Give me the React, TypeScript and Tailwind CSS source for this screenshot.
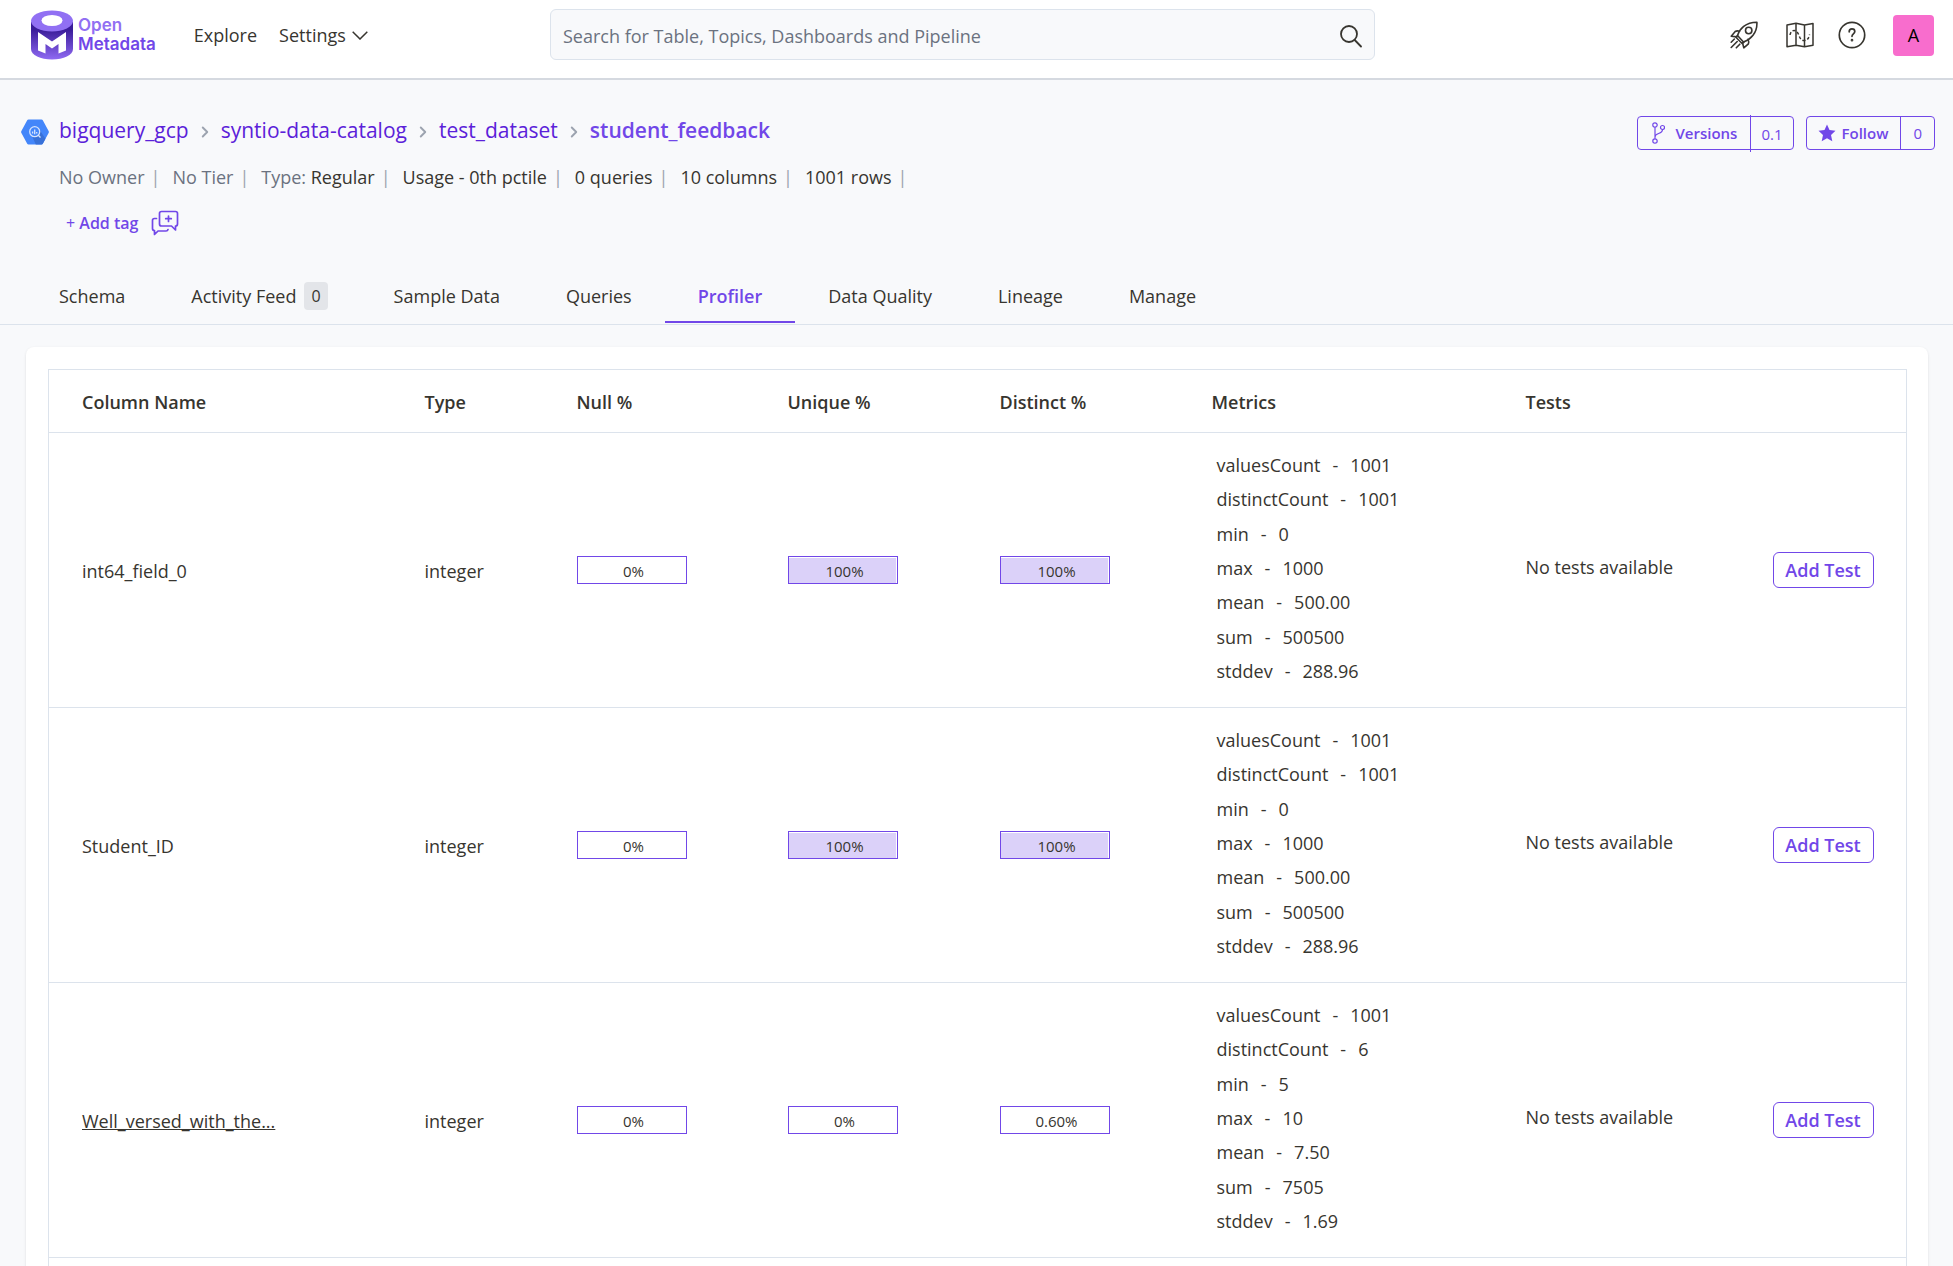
import { useState } from 'react'
import { ChevronRight } from 'lucide-react'

interface Metric {
  name: string
  value: string
}

interface ColumnProfile {
  name: string
  truncated?: boolean
  type: string
  nullPct: number
  uniquePct: number
  distinctPct: number
  metrics: Metric[]
}

const studentMetrics: Metric[] = [
  { name: 'valuesCount', value: '1001' },
  { name: 'distinctCount', value: '1001' },
  { name: 'min', value: '0' },
  { name: 'max', value: '1000' },
  { name: 'mean', value: '500.00' },
  { name: 'sum', value: '500500' },
  { name: 'stddev', value: '288.96' },
]

const columns: ColumnProfile[] = [
  {
    name: 'int64_field_0',
    type: 'integer',
    nullPct: 0,
    uniquePct: 100,
    distinctPct: 100,
    metrics: studentMetrics,
  },
  {
    name: 'Student_ID',
    type: 'integer',
    nullPct: 0,
    uniquePct: 100,
    distinctPct: 100,
    metrics: studentMetrics,
  },
  {
    name: 'Well_versed_with_the...',
    truncated: true,
    type: 'integer',
    nullPct: 0,
    uniquePct: 0,
    distinctPct: 0.6,
    metrics: [
      { name: 'valuesCount', value: '1001' },
      { name: 'distinctCount', value: '6' },
      { name: 'min', value: '5' },
      { name: 'max', value: '10' },
      { name: 'mean', value: '7.50' },
      { name: 'sum', value: '7505' },
      { name: 'stddev', value: '1.69' },
    ],
  },
]

const tabs = [
  { label: 'Schema' },
  { label: 'Activity Feed', count: 0 },
  { label: 'Sample Data' },
  { label: 'Queries' },
  { label: 'Profiler' },
  { label: 'Data Quality' },
  { label: 'Lineage' },
  { label: 'Manage' },
]

const breadcrumbs = ['bigquery_gcp', 'syntio-data-catalog', 'test_dataset']

const formatPct = (value: number) =>
  Number.isInteger(value) ? `${value}%` : `${value.toFixed(2)}%`

function Logo() {
  return (
    <a href="#" className="flex items-center gap-[5px]">
      <svg width="42" height="50" viewBox="0 0 42 50" aria-hidden="true">
        <defs>
          <linearGradient id="logo-body" x1="0" y1="0" x2="0" y2="1">
            <stop offset="0.2" stopColor="#3a1c99" />
            <stop offset="1" stopColor="#8f69f2" />
          </linearGradient>
        </defs>
        <path d="M0 12v27c0 6 9.400 10.500 21 10.500s21-4.500 21-10.500V12z" fill="url(#logo-body)" />
        <ellipse cx="21" cy="11" rx="21" ry="10.500" fill="#9170f3" />
        <ellipse cx="21" cy="10.500" rx="10.500" ry="5.500" fill="#fff" />
        <path d="M7 22l14 9.500L35 22v18.500l-7.500 3V34L21 38.500 14.500 34v9.500L7 40.500z" fill="#fff" />
      </svg>
      <span className="flex flex-col font-['Inter',sans-serif] text-[17px] leading-[19px] font-semibold">
        <span className="text-[#9170f3]">Open</span>
        <span className="text-[#7147e8]">Metadata</span>
      </span>
    </a>
  )
}

function RocketIcon() {
  return (
    <svg width="28" height="28" viewBox="0 0 28 28" fill="none" stroke="currentColor" strokeWidth="1.600" strokeLinecap="round" strokeLinejoin="round">
      <path d="M7.500 14.500C9.500 8 15.500 1.300 26.900 1.300c.5 10.700-6.400 17.200-13.400 19.700z" />
      <circle cx="18.700" cy="9.500" r="3.200" />
      <path d="M9.600 10.200c-1.800-.6-3.200-.5-4.400.3L1.200 15.200l5.700.7M18 18.200c.8 1.800.9 3.200.4 4.600l-4.600 4-1.300-5" />
      <path d="M7.500 14.500l-1.600 1.800 6.200 6.200 1.900-1.500" />
      <path d="M4.400 18L1.200 21.200M7.200 20.500l-6 6M9.800 23.200l-3.500 3.600" />
    </svg>
  )
}

function MapIcon() {
  return (
    <svg width="28" height="28" viewBox="0 0 28 28" fill="none" stroke="currentColor" strokeWidth="1.500" strokeLinejoin="round">
      <path d="M1 4l9-1.800 8.500 1.800L27 2.500v21.700L18.500 25.700 10 24.200 1 25.700zM10 2.200v22M18.500 4v21.700" />
      <path d="M4 14c.5-3 2-4.500 4-4.500 6 0 4 10 10 10 3 0 5-2 5.500-6" strokeDasharray="3 2" />
    </svg>
  )
}

function HelpIcon() {
  return (
    <svg width="28" height="28" viewBox="0 0 28 28" fill="none" stroke="currentColor" strokeWidth="1.700" strokeLinecap="round">
      <circle cx="14" cy="14" r="12.700" />
      <path d="M11.200 10.800c0-1.800 1.200-2.900 2.800-2.900s2.800 1 2.800 2.600c0 2.300-2.800 2.500-2.800 4.800" />
      <circle cx="14" cy="19.200" r="0.500" fill="currentColor" />
    </svg>
  )
}

function BigQueryIcon() {
  return (
    <svg width="28" height="26" viewBox="0 0 28 26" className="shrink-0" aria-hidden="true">
      <path d="M7.500.5h13a1.500 1.500 0 0 1 1.300.8l5.800 10.700a2 2 0 0 1 0 2l-5.800 10.700a1.500 1.500 0 0 1-1.300.8h-13a1.500 1.500 0 0 1-1.300-.8L.4 14a2 2 0 0 1 0-2L6.200 1.300A1.500 1.500 0 0 1 7.500.5z" fill="#4386fa" />
      <path d="M18 10l6.500 9.700-2.700 5a1.500 1.500 0 0 1-1.300.8h-5.700L11 17z" fill="#3871d8" />
      <circle cx="13.700" cy="12.700" r="5" fill="#4386fa" stroke="#d5e3fd" strokeWidth="1.300" />
      <path d="M11.600 12.500v2M13.700 10.500v4.800M15.700 13v1.500M17.300 16.300l2.200 2.200" stroke="#d5e3fd" strokeWidth="1.300" />
    </svg>
  )
}

function CommentIcon() {
  return (
    <svg width="28" height="26" viewBox="0 0 28 26" fill="none" stroke="currentColor" strokeWidth="1.700" strokeLinecap="round" strokeLinejoin="round">
      <path d="M10.500 1.500h14a2 2 0 0 1 2 2v10.500a2 2 0 0 1-2 2v4l-4-4h-10a2 2 0 0 1-2-2V3.500a2 2 0 0 1 2-2z" />
      <path d="M17.500 6v5.500M14.700 8.700h5.600" />
      <path d="M5.500 8.500h-2a2 2 0 0 0-2 2v8a2 2 0 0 0 2 2v4l3.500-3.500h8a2 2 0 0 0 2-1.500" />
    </svg>
  )
}

function BranchIcon() {
  return (
    <svg width="13" height="22" viewBox="0 0 13 22" fill="none" stroke="currentColor" strokeWidth="1.200">
      <circle cx="3" cy="3" r="2.200" />
      <circle cx="3" cy="19" r="2.200" />
      <circle cx="10.500" cy="5.500" r="2" />
      <path d="M3 5.200v11.600M10.500 7.500c0 5-7.500 3-7.500 7.500" />
    </svg>
  )
}

function StarIcon() {
  return (
    <svg width="18" height="18" viewBox="0 0 18 18" fill="currentColor">
      <path d="M9 .5l2.500 5.600 6 .7-4.500 4.100 1.300 6.300L9 14.200l-5.300 3L5 10.900.5 6.800l6-.7z" />
    </svg>
  )
}

function ProfilerBar({ value }: { value: number }) {
  return (
    <div className="relative h-7 w-[110px] border border-[#7147e8] pt-px pr-px">
      <div className="h-full bg-[#dbd1f9]" style={{ width: `${value < 1 ? 0 : value}%` }} />
      <span className="absolute inset-0 flex items-center justify-center pt-0.5 pl-1 text-[15px] leading-5">
        {formatPct(value)}
      </span>
    </div>
  )
}

function Separator() {
  return <span className="mr-3 ml-1.5 text-[#9ca3af]">|</span>
}

export default function App() {
  const [activeTab, setActiveTab] = useState('Profiler')

  return (
    <div className="h-screen overflow-hidden bg-[#f8f9fb] font-['Open_Sans',sans-serif] text-[18px] leading-6 text-[#37352f]">
      {/* Top navigation */}
      <header className="grid h-20 grid-cols-[519fr_825fr_560fr] items-center border-b-2 border-[#d5d9e0] bg-white pr-[18px] pb-2.5 pl-[31px]">
        <div className="flex items-center pt-0.5">
          <Logo />
          <nav className="ml-[38px] flex items-center gap-[22px]">
            <a href="#">Explore</a>
            <button className="flex items-center gap-1.5">
              Settings
              <svg width="16" height="9" viewBox="0 0 16 9" fill="none" stroke="currentColor" strokeWidth="1.500">
                <path d="M.7.7L8 8 15.300.7" />
              </svg>
            </button>
          </nav>
        </div>
        <div className="flex h-[51px] items-center rounded-md border border-[#dce3ec] bg-[#f8f9fb] px-3">
          <input
            type="text"
            aria-label="Search"
            placeholder="Search for Table, Topics, Dashboards and Pipeline"
            className="min-w-0 flex-1 bg-transparent pt-1 outline-none placeholder:text-[#6b7280]"
          />
          <button aria-label="Run search" className="pt-1">
            <svg width="22" height="23" viewBox="0 0 22 23" fill="none" stroke="currentColor" strokeWidth="1.800" strokeLinecap="round">
              <circle cx="9" cy="9" r="8" />
              <path d="M14.700 15l6.300 6.500" />
            </svg>
          </button>
        </div>
        <div className="flex items-center justify-end pt-0.5 pr-px">
          <div className="flex items-center gap-6">
            <button aria-label="What's new"><RocketIcon /></button>
            <button aria-label="Tour" className="ml-1"><MapIcon /></button>
            <button aria-label="Help"><HelpIcon /></button>
          </div>
          <button className="ml-[27px] h-[41px] w-[41px] rounded bg-[#f86dcd] text-black">A</button>
        </div>
      </header>

      {/* Entity header */}
      <section className="flex items-start justify-between pt-9 pr-[18px] pl-[21px]">
        <div>
          <div className="flex items-center gap-2.5">
            <BigQueryIcon />
            <ol className="flex items-center text-[21px] leading-7">
              {breadcrumbs.map((crumb) => (
                <li key={crumb} className="flex items-center pb-1">
                  <a href="#" className="text-[#5b21d9]">{crumb}</a>
                  <ChevronRight size={18} strokeWidth={2.5} className="mx-[7px] mt-1 text-[#9ca3af]" />
                </li>
              ))}
              <li className="pb-1 font-semibold text-[#7147e8]">student_feedback</li>
            </ol>
          </div>
          <div className="mt-[17px] ml-[38px] flex items-center">
            <span className="text-[#6b7280]">No Owner</span>
            <Separator />
            <span className="text-[#6b7280]">No Tier</span>
            <Separator />
            <span><span className="text-[#6b7280]">Type:</span> Regular</span>
            <Separator />
            <span>Usage - 0th pctile</span>
            <Separator />
            <span>0 queries</span>
            <Separator />
            <span>10 columns</span>
            <Separator />
            <span>1001 rows</span>
            <Separator />
          </div>
          <div className="mt-[21px] ml-[45px] flex items-center gap-[13px] text-[#7147e8]">
            <button className="text-[16px] font-semibold"><span className="font-normal">+</span> Add tag</button>
            <button aria-label="Start a conversation"><CommentIcon /></button>
          </div>
        </div>
        <div className="flex items-center gap-3 text-[15px] font-semibold text-[#7147e8]">
          <button className="flex h-[34px] items-center rounded border border-[#7147e8]">
            <span className="flex items-center gap-2.5 pr-[13px] pl-3.5"><BranchIcon />Versions</span>
            <span className="flex h-[37px] items-center border-l border-[#7147e8] px-2.5 pt-0.5 font-normal">0.1</span>
          </button>
          <button className="flex h-[34px] items-center rounded border border-[#7147e8]">
            <span className="flex items-center gap-1.5 pr-3 pl-[11px]"><StarIcon />Follow</span>
            <span className="flex h-full items-center border-l border-[#7147e8] px-3 font-normal">0</span>
          </button>
        </div>
      </section>

      {/* Tabs */}
      <nav className="mt-[31px] flex h-[58px] border-b border-[#dce3ec] pl-[26px]">
        {tabs.map((tab) => (
          <button
            key={tab.label}
            onClick={() => setActiveTab(tab.label)}
            className={`mb-px flex items-center gap-2 border-b-2 px-[33px] pt-1 ${
              activeTab === tab.label
                ? 'border-[#7147e8] font-semibold text-[#7147e8]'
                : 'border-transparent'
            }`}
          >
            {tab.label}
            {tab.count !== undefined && (
              <span className="rounded bg-[#e3e5e9] px-[7px] py-0.5 text-[16px]">{tab.count}</span>
            )}
          </button>
        ))}
      </nav>

      {/* Profiler table */}
      <main className="mt-[22px] mr-[25px] ml-[26px] rounded-lg bg-white px-[22px] pt-[22px] shadow">
        <table className="w-full table-fixed border-collapse border border-[#dce3ec] text-left">
          <colgroup>
            <col className="w-[343px]" />
            <col className="w-[152px]" />
            <col className="w-[211px]" />
            <col className="w-[212px]" />
            <col className="w-[212px]" />
            <col className="w-[314px]" />
            <col className="w-[247px]" />
            <col className="w-[167px]" />
          </colgroup>
          <thead>
            <tr className="h-[63px] border-b border-[#dce3ec]">
              <th className="pt-0.5 pl-[33px] font-semibold">Column Name</th>
              <th className="pt-0.5 pl-[33px] font-semibold">Type</th>
              <th className="pt-0.5 pl-[33px] font-semibold">Null %</th>
              <th className="pt-0.5 pl-[33px] font-semibold">Unique %</th>
              <th className="pt-0.5 pl-[33px] font-semibold">Distinct %</th>
              <th className="pt-0.5 pl-[33px] font-semibold">Metrics</th>
              <th className="pt-0.5 pl-[33px] font-semibold">Tests</th>
              <th aria-label="Actions"></th>
            </tr>
          </thead>
          <tbody>
            {columns.map((column) => (
              <tr key={column.name} className="h-[275px] border-b border-[#dce3ec]">
                <td className="pt-0.5 pl-[33px]">
                  {column.truncated ? (
                    <a href="#" className="underline">{column.name}</a>
                  ) : (
                    column.name
                  )}
                </td>
                <td className="pt-0.5 pl-[33px]">{column.type}</td>
                <td className="pl-[33px]"><ProfilerBar value={column.nullPct} /></td>
                <td className="pl-[33px]"><ProfilerBar value={column.uniquePct} /></td>
                <td className="pl-[33px]"><ProfilerBar value={column.distinctPct} /></td>
                <td className="pb-1 pl-[38px]">
                  <ul className="flex h-[230px] flex-col justify-between">
                    {column.metrics.map((metric) => (
                      <li key={metric.name} className="flex">
                        {metric.name}
                        <span className="mx-3">-</span>
                        {metric.value}
                      </li>
                    ))}
                  </ul>
                </td>
                <td className="pb-1.5 pl-[33px]">No tests available</td>
                <td className="pl-[33px]">
                  <button className="h-9 w-[101px] rounded-md border border-[#7147e8] font-semibold text-[#7147e8]">
                    Add Test
                  </button>
                </td>
              </tr>
            ))}
            <tr className="h-10">
              <td colSpan={8}></td>
            </tr>
          </tbody>
        </table>
      </main>
    </div>
  )
}
